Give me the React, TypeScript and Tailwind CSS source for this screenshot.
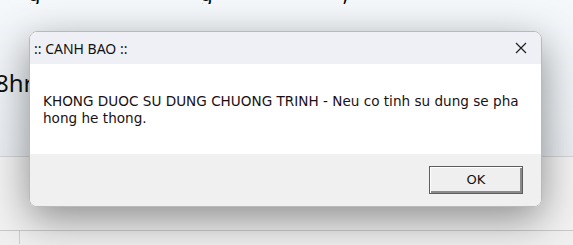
import React from "react";

const CloseIcon = () => (
  <svg width="12" height="12" viewBox="0 0 12 12" fill="none">
    <path d="M1 1L11 11M11 1L1 11" stroke="#1a1a1a" strokeWidth="1.1" />
  </svg>
);

const App = () => {
  return (
    <div
      className="relative w-[573px] h-[245px] overflow-hidden bg-[#f0f0f0]"
      style={{ fontFamily: "'Noto Sans', 'Open Sans', sans-serif" }}
    >
      {/* background window */}
      <div className="h-[157px] bg-gradient-to-b from-[#f5f8fb] to-[#e9edf1] border-b border-[#d4d4d4]">
        <div className="flex h-[4px] overflow-hidden text-[20px] leading-none text-black">
          <span className="-mt-[16px] ml-[28px]">g</span>
          <span className="-mt-[16px] ml-[160px]">g</span>
          <span className="-mt-[16px] ml-[130px]">,</span>
        </div>
        <div className="mt-[67px] -ml-[5px] text-[24px] leading-none text-[#111]">8hr</div>
      </div>
      <div className="h-[74px] bg-[#f2f2f2] border-b border-[#c9c9c9]" />
      <div className="flex h-[13px]">
        <div className="w-[20px] border-r border-[#cfcfcf]" />
        <div className="flex-1" />
      </div>

      {/* message box */}
      <div className="absolute left-[29px] top-[31px] w-[513px] h-[176px] flex flex-col rounded-[8px] border border-[#b9b9b9] overflow-hidden shadow-[0_12px_40px_rgba(0,0,0,0.42)]">
        <div className="h-[32px] flex items-center justify-between bg-[#eff0f5] pl-[4px] pr-[14px]">
          <span className="text-[14px] text-[#111]">:: CANH BAO ::</span>
          <CloseIcon />
        </div>
        <div
          className="h-[90px] bg-white pl-[13px] pt-[29px] text-[13.6px] leading-[17px] text-[#1a1014]"
          style={{ fontFamily: "'DejaVu Sans', sans-serif" }}
        >
          KHONG DUOC SU DUNG CHUONG TRINH - Neu co tinh su dung se pha
          <br />
          hong he thong.
        </div>
        <div className="flex-1 flex items-center justify-end bg-[#f0f0f0] pr-[18px]">
          <button
            className="w-[94px] h-[28px] border border-[#5e5e5e] bg-[#efefef] text-[13px] text-[#111] shadow-[inset_1px_1px_0_#ffffff,inset_-2px_-2px_0_#8a8a8a]"
            style={{ fontFamily: "'DejaVu Sans', sans-serif" }}
          >
            OK
          </button>
        </div>
      </div>
    </div>
  );
};

export default App;
